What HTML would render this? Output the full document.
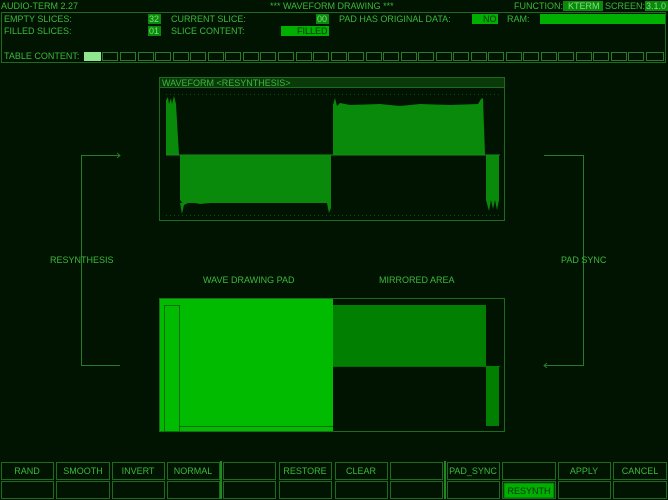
<!DOCTYPE html>
<html><head><meta charset="utf-8"><style>
html,body{margin:0;padding:0;background:#011401;}
svg{display:block}
text{font-family:"Liberation Sans",sans-serif;font-size:9px;fill:#3db83d;}
</style></head><body>
<svg width="668" height="500" viewBox="0 0 668 500" xmlns="http://www.w3.org/2000/svg">
<rect width="668" height="500" fill="#011401"/>
<!-- header -->
<text x="1" y="9">AUDIO-TERM 2.27</text>
<text x="270" y="9">*** WAVEFORM DRAWING ***</text>
<text x="514" y="9">FUNCTION:</text>
<rect x="563" y="1" width="40" height="10" fill="#0a8a0a"/>
<text x="568" y="9" fill="#8fe08f" style="fill:#7fe07f">KTERM</text>
<text x="605" y="9">SCREEN:</text>
<rect x="645" y="1" width="23" height="10" fill="#0a8a0a"/>
<text x="646" y="9" style="fill:#7fe07f">3.1.0</text>
<!-- top panel -->
<rect x="1.5" y="12.5" width="664" height="50" fill="none" stroke="#1e6a1e"/>
<text x="4" y="22">EMPTY SLICES:</text>
<text x="4" y="34">FILLED SLICES:</text>
<rect x="148" y="14" width="13" height="10" fill="#0a8a0a"/><text x="149" y="22" style="fill:#7fe07f">32</text>
<rect x="148" y="26" width="13" height="10" fill="#0a8a0a"/><text x="149" y="34" style="fill:#7fe07f">01</text>
<text x="171" y="22">CURRENT SLICE:</text>
<text x="171" y="34">SLICE CONTENT:</text>
<rect x="316" y="14" width="13" height="10" fill="#0a8a0a"/><text x="317" y="22" style="fill:#7fe07f">00</text>
<rect x="281" y="26" width="48" height="10" fill="#00b000"/><text x="297" y="34" style="fill:#063006">FILLED</text>
<text x="339" y="22">PAD HAS ORIGINAL DATA:</text>
<rect x="472" y="14" width="26" height="10" fill="#00b000"/><text x="483" y="22" style="fill:#063006">NO</text>
<text x="507" y="22">RAM:</text>
<rect x="540" y="14" width="125" height="10" fill="#00b000"/>
<text x="4" y="59">TABLE CONTENT:</text>
<g fill="none" stroke="#1e6a1e">
<rect x="84.5" y="52.5" width="16" height="8" fill="#8fe88f" stroke="#8fe88f"/>
<g id="cells"></g>
</g>
<g fill="none" stroke="#2a7a2a" id="tc">
<rect x="102.5" y="52.5" width="15" height="8"/><rect x="120.5" y="52.5" width="15" height="8"/><rect x="138.5" y="52.5" width="15" height="8"/><rect x="155.5" y="52.5" width="15" height="8"/><rect x="173.5" y="52.5" width="15" height="8"/><rect x="190.5" y="52.5" width="15" height="8"/><rect x="208.5" y="52.5" width="15" height="8"/><rect x="225.5" y="52.5" width="15" height="8"/><rect x="243.5" y="52.5" width="15" height="8"/><rect x="260.5" y="52.5" width="15" height="8"/><rect x="278.5" y="52.5" width="15" height="8"/><rect x="296.5" y="52.5" width="15" height="8"/><rect x="313.5" y="52.5" width="15" height="8"/><rect x="331.5" y="52.5" width="15" height="8"/><rect x="348.5" y="52.5" width="15" height="8"/><rect x="366.5" y="52.5" width="15" height="8"/><rect x="383.5" y="52.5" width="15" height="8"/><rect x="401.5" y="52.5" width="15" height="8"/><rect x="418.5" y="52.5" width="15" height="8"/><rect x="436.5" y="52.5" width="15" height="8"/><rect x="453.5" y="52.5" width="15" height="8"/><rect x="471.5" y="52.5" width="15" height="8"/><rect x="488.5" y="52.5" width="15" height="8"/><rect x="506.5" y="52.5" width="15" height="8"/><rect x="523.5" y="52.5" width="15" height="8"/><rect x="541.5" y="52.5" width="15" height="8"/><rect x="558.5" y="52.5" width="15" height="8"/><rect x="576.5" y="52.5" width="15" height="8"/><rect x="593.5" y="52.5" width="15" height="8"/><rect x="611.5" y="52.5" width="15" height="8"/><rect x="628.5" y="52.5" width="15" height="8"/><rect x="646.5" y="52.5" width="17" height="8"/>
</g>
<!-- waveform box -->
<rect x="159.5" y="77.5" width="345" height="143" fill="none" stroke="#1e6a1e"/>
<rect x="160" y="78" width="344" height="9" fill="#0a3a0a"/>
<line x1="160" y1="87.5" x2="504" y2="87.5" stroke="#1e6a1e"/>
<text x="162" y="86">WAVEFORM &lt;RESYNTHESIS&gt;</text>
<line x1="166" y1="94.5" x2="500" y2="94.5" stroke="#0e4a0e" stroke-dasharray="1 3"/>
<line x1="166" y1="215.5" x2="500" y2="215.5" stroke="#0e4a0e" stroke-dasharray="1 3"/>
<g fill="#0a8a0a">
<path d="M166,155 L166,100 L168,97 L169,104 L171,98 L172,104 L174,96 L176,104 L179,155 Z"/>
<path d="M180,155 L331,155 L331,208 L329,213 L327,203 L180,203 L182,214 L184,205 Z"/>
<path d="M180,155 L180,200 L184,205 L190,202 L200,204 L220,202 L240,203 L260,202 L280,203 L300,202 L320,203 L327,202 L329,212 L331,155 Z"/>
<path d="M333,155 L333,105 L335,98 L337,106 L340,103 L350,105 L380,104 L400,106 L420,104 L450,105 L478,104 L481,99 L483,98 L485,155 Z"/>
<path d="M486,155 L499,155 L499,200 L497,210 L495,200 L493,209 L491,200 L489,211 L486,200 Z"/>
</g>
<line x1="166" y1="155" x2="500" y2="155" stroke="#1a8a1a"/>
<!-- brackets -->
<g fill="none" stroke="#2a7a2a">
<path d="M120,155.5 H81.5 V365.5 H120"/>
<path d="M117,153 L120,155.5 L117,158"/>
<path d="M544,155.5 H583.5 V365.5 H544"/>
<path d="M547,363 L544,365.5 L547,368"/>
</g>
<text x="50" y="263">RESYNTHESIS</text>
<text x="561" y="263">PAD SYNC</text>
<text x="203" y="283">WAVE DRAWING PAD</text>
<text x="379" y="283">MIRRORED AREA</text>
<!-- pad -->
<rect x="159.5" y="298.5" width="345" height="133" fill="none" stroke="#1e6a1e"/>
<rect x="160" y="299" width="173" height="132" fill="#00bb00"/>
<rect x="164.5" y="305.5" width="15" height="126" fill="none" stroke="#067006"/>
<line x1="179.5" y1="426.5" x2="333" y2="426.5" stroke="#067006"/>
<rect x="333" y="305" width="153" height="61" fill="#007f00"/>
<line x1="333" y1="366.5" x2="500" y2="366.5" stroke="#0a6a0a"/>
<rect x="486" y="366" width="13" height="60" fill="#007f00"/>
<!-- buttons -->
<g fill="none" stroke="#1e6a1e">
<rect x="1.5" y="462.5" width="52" height="17"/><rect x="1.5" y="481.5" width="52" height="17"/>
<rect x="56.5" y="462.5" width="53" height="17"/><rect x="56.5" y="481.5" width="53" height="17"/>
<rect x="112.5" y="462.5" width="52" height="17"/><rect x="112.5" y="481.5" width="52" height="17"/>
<rect x="167.5" y="462.5" width="52" height="17"/><rect x="167.5" y="481.5" width="52" height="17"/>
<rect x="223.5" y="462.5" width="52" height="17"/><rect x="223.5" y="481.5" width="52" height="17"/>
<rect x="279.5" y="462.5" width="52" height="17"/><rect x="279.5" y="481.5" width="52" height="17"/>
<rect x="335.5" y="462.5" width="52" height="17"/><rect x="335.5" y="481.5" width="52" height="17"/>
<rect x="390.5" y="462.5" width="52" height="17"/><rect x="390.5" y="481.5" width="52" height="17"/>
<rect x="447.5" y="462.5" width="52" height="17"/><rect x="447.5" y="481.5" width="52" height="17"/>
<rect x="502.5" y="462.5" width="53" height="17"/><rect x="502.5" y="481.5" width="53" height="17"/>
<rect x="558.5" y="462.5" width="52" height="17"/><rect x="558.5" y="481.5" width="52" height="17"/>
<rect x="613.5" y="462.5" width="53" height="17"/><rect x="613.5" y="481.5" width="53" height="17"/>
</g>
<rect x="220" y="461" width="2" height="38" fill="#1e8a1e"/>
<rect x="444" y="461" width="2" height="38" fill="#1e8a1e"/>
<rect x="504" y="483" width="50" height="15" fill="#00b000" stroke="#0a6a0a"/>
<g text-anchor="middle">
<text x="27" y="474">RAND</text>
<text x="83" y="474">SMOOTH</text>
<text x="138" y="474">INVERT</text>
<text x="193" y="474">NORMAL</text>
<text x="305" y="474">RESTORE</text>
<text x="361" y="474">CLEAR</text>
<text x="473" y="474">PAD_SYNC</text>
<text x="584" y="474">APPLY</text>
<text x="640" y="474">CANCEL</text>
<text x="529" y="494" style="fill:#063006">RESYNTH</text>
</g>
</svg>
</body></html>
